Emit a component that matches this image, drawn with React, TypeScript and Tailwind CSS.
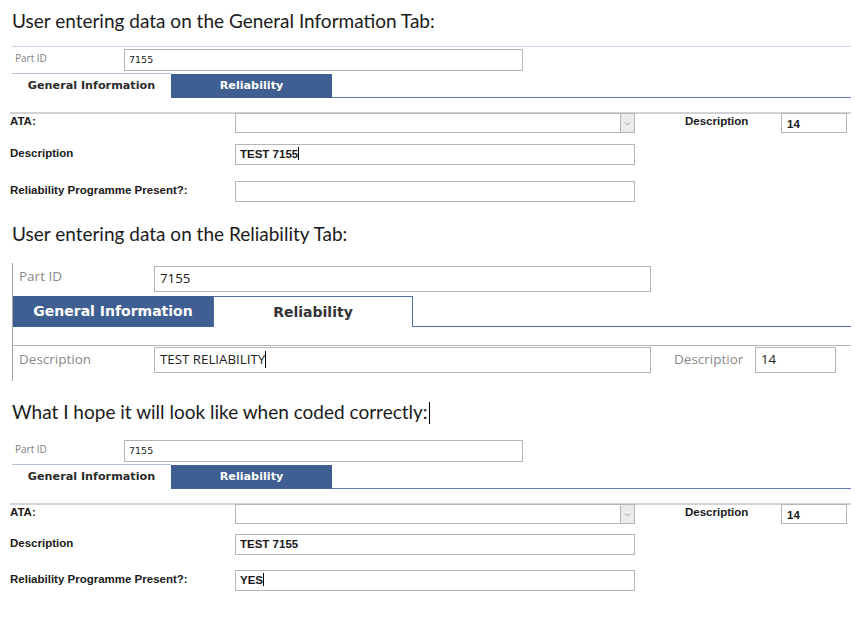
import React from "react"

const heading = "font-['Lato','Open_Sans',sans-serif] text-[19px] text-[#1b1b1b]"
const boldUi = "font-['Liberation_Sans',Arial,sans-serif] font-bold text-[11.5px] text-[#1a1a1a]"
const tabFont = "font-['DejaVu_Sans',Verdana,sans-serif] font-bold text-[11.2px]"

function Caret({ h = "h-[13px]" }: { h?: string }) {
    return <span className={`inline-block w-px ${h} bg-black align-middle -mt-[2px]`} />
}

// Compact form (sections 1 and 3)
function SmallForm({
    topLine,
    description,
    reliability,
    caretOn,
    tight,
}: {
    topLine?: boolean
    description: string
    reliability: string
    caretOn: "description" | "reliability"
    tight?: boolean
}) {
    return (
        <div className={`ml-[12px] w-[839px] ${topLine ? "border-t border-[#c7d6eb]" : "border-t border-transparent"}`}>
            {/* Part ID */}
            <div className="flex h-[26px] items-start">
                <div className="w-[112px] pl-[3px] pt-[4px] font-['Open_Sans',sans-serif] text-[10px] text-[#808080]">Part ID</div>
                <div className="mt-[2px] h-[22px] w-[399px] border border-[#b5b5b5] pl-[4px] font-['DejaVu_Sans',Tahoma,sans-serif] text-[9.5px] leading-[20px] text-[#222]">
                    7155
                </div>
            </div>

            {/* Tabs */}
            <div className="flex h-[25px]">
                <div className={`flex w-[159px] items-center justify-center border-t border-[#b3c2d9] text-[#2b2b2b] ${tabFont}`}>
                    General Information
                </div>
                <div className={`mt-[1px] flex w-[161px] items-center justify-center bg-[#3f5e91] text-white ${tabFont}`}>
                    Reliability
                </div>
                <div className="flex-1 border-b border-[#5a7cb2]" />
            </div>

            {/* Fields */}
            <div className="mt-[14px] -ml-[2px] border-t-2 border-[#d3d3d3]">
                <div className="-mt-[1px] flex h-[20px] items-center">
                    <div className={`w-[225px] pb-[3px] ${boldUi}`}>ATA:</div>
                    <div className="flex h-[20px] w-[400px] border border-[#b5b5b5]">
                        <div className="flex-1" />
                        <div className="flex w-[14px] items-center justify-center border-l border-[#b5b5b5] bg-[#ebebeb]">
                            <svg width="7" height="5" viewBox="0 0 7 5" fill="none" stroke="#9a9a9a" strokeWidth="1">
                                <path d="M1 1.5 L3.5 4 L6 1.5" />
                            </svg>
                        </div>
                    </div>
                    <div className={`ml-[50px] w-[96px] pb-[3px] ${boldUi}`}>Description</div>
                    <div className={`h-[20px] w-[66px] border border-[#b5b5b5] pl-[5px] pt-[2px] ${boldUi}`}>14</div>
                </div>

                <div className={`${tight ? "mt-[10px]" : "mt-[11px]"} flex h-[21px] items-center`}>
                    <div className={`w-[225px] pb-[2px] ${boldUi}`}>Description</div>
                    <div className={`flex h-[21px] w-[400px] items-center border border-[#b5b5b5] pl-[4px] ${boldUi}`}>
                        {description}
                        {caretOn === "description" && <Caret />}
                    </div>
                </div>

                <div className={`${tight ? "mt-[15px]" : "mt-[16px]"} flex h-[21px] items-center`}>
                    <div className={`w-[225px] pb-[2px] ${boldUi}`}>Reliability Programme Present?:</div>
                    <div className={`flex h-[21px] w-[400px] items-center border border-[#b5b5b5] pl-[4px] ${boldUi}`}>
                        {reliability}
                        {caretOn === "reliability" && <Caret />}
                    </div>
                </div>
            </div>
        </div>
    )
}

// Larger form (section 2, Reliability tab active)
function LargeForm() {
    const label = "font-['Open_Sans',sans-serif] text-[13.5px] text-[#8a8a8a]"
    const value = "font-['Open_Sans',sans-serif] text-[13.3px] text-[#222]"
    return (
        <div className="ml-[12px] h-[118px] w-[839px] border-l border-[#a3a3a3]">
            <div className="flex h-[33px] items-start">
                <div className={`w-[141px] pl-[6px] pt-[3px] ${label}`}>Part ID</div>
                <div className={`mt-[3px] flex h-[26px] w-[497px] items-center border border-[#b5b5b5] pl-[5px] ${value}`}>7155</div>
            </div>

            <div className="flex h-[31px]">
                <div className="flex w-[200px] items-center justify-center bg-[#3f5e91] font-['DejaVu_Sans',Verdana,sans-serif] text-[14px] font-bold text-white">
                    General Information
                </div>
                <div className="flex w-[200px] items-center justify-center border-x border-t border-[#4e6fa3] font-['DejaVu_Sans',Verdana,sans-serif] text-[14px] font-bold text-[#333]">
                    Reliability
                </div>
                <div className="flex-1 border-b border-[#4e6fa3]" />
            </div>

            <div className="mt-[18px] border-t border-[#b3b3b3]">
                <div className="mt-[1px] flex h-[26px] items-center">
                    <div className={`w-[141px] pb-[2px] pl-[6px] ${label}`}>Description</div>
                    <div className={`flex h-[26px] w-[497px] items-center border border-[#b5b5b5] pl-[5px] ${value}`}>
                        TEST RELIABILITY
                        <Caret h="h-[17px]" />
                    </div>
                    <div className={`ml-[23px] w-[69px] overflow-hidden whitespace-nowrap pb-[2px] ${label}`}>Description</div>
                    <div className={`ml-[12px] flex h-[26px] w-[81px] items-center border border-[#b5b5b5] pl-[5px] ${value}`}>14</div>
                </div>
            </div>
        </div>
    )
}

export default function App() {
    return (
        <div className="h-[627px] w-[855px] overflow-hidden bg-white">
            <div className={`h-[46px] pl-[12px] pt-[7px] ${heading}`}>User entering data on the General Information Tab:</div>
            <SmallForm topLine description="TEST 7155" reliability="" caretOn="description" />

            <div className={`mt-[18px] h-[43px] pl-[12px] ${heading}`}>User entering data on the Reliability Tab:</div>
            <LargeForm />

            <div className={`mt-[17px] flex h-[39px] items-start pl-[12px] ${heading}`}>
                <span>What I hope it will look like when coded correctly:</span>
                <span className="ml-px mt-[4px] inline-block h-[22px] w-px bg-black" />
            </div>
            <SmallForm description="TEST 7155" reliability="YES" caretOn="reliability" tight />
        </div>
    )
}
